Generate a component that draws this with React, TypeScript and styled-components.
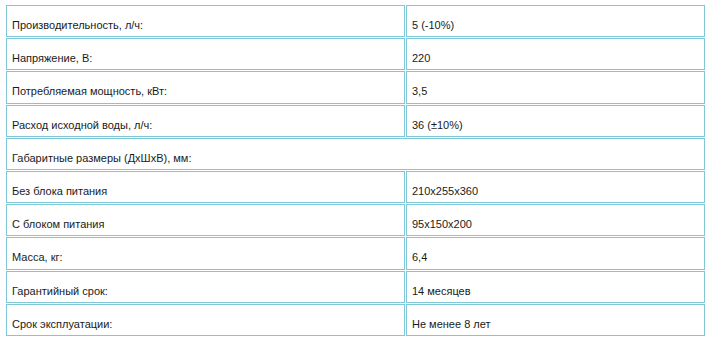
import React from 'react';
import styled, { createGlobalStyle } from 'styled-components';

const GlobalStyle = createGlobalStyle`
  html, body {
    margin: 0;
    padding: 0;
    background: #fff;
  }
`;

const Wrapper = styled.div`
  padding: 4px 6px 0 5px;
`;

const Table = styled.table`
  width: 701px;
  border-collapse: separate;
  border-spacing: 1px;
  font-family: "Liberation Sans", Arial, sans-serif;
  font-size: 11px;
  color: #1a1a1a;
`;

const Cell = styled.td<{ $wide?: boolean }>`
  border: 1px solid #80c8d8;
  padding: 12px 5px 4px 5px;
  line-height: 14.2px;
  height: 14.2px;
  width: ${(p) => (p.$wide ? 'auto' : '387px')};
  vertical-align: top;
  text-align: left;
`;

const rows: Array<[string, string?]> = [
  ['Производительность, л/ч:', '5 (-10%)'],
  ['Напряжение, В:', '220'],
  ['Потребляемая мощность, кВт:', '3,5'],
  ['Расход исходной воды, л/ч:', '36 (±10%)'],
  ['Габаритные размеры (ДхШхВ), мм:'],
  ['Без блока питания', '210х255х360'],
  ['С блоком питания', '95х150х200'],
  ['Масса, кг:', '6,4'],
  ['Гарантийный срок:', '14 месяцев'],
  ['Срок эксплуатации:', 'Не менее 8 лет'],
];

export default function App() {
  return (
    <>
      <GlobalStyle />
      <Wrapper>
        <Table>
          <tbody>
            {rows.map(([label, value]) =>
              value === undefined ? (
                <tr key={label}>
                  <Cell colSpan={2} $wide>{label}</Cell>
                </tr>
              ) : (
                <tr key={label}>
                  <Cell>{label}</Cell>
                  <Cell $wide>{value}</Cell>
                </tr>
              )
            )}
          </tbody>
        </Table>
      </Wrapper>
    </>
  );
}
